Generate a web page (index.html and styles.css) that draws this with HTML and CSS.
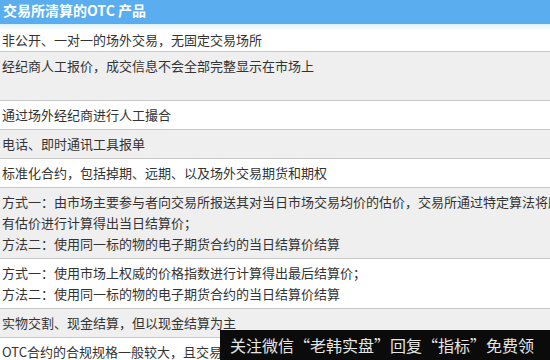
FILE: index.html
```html
<!DOCTYPE html>
<html lang="zh">
<head>
<meta charset="utf-8">
<link rel="stylesheet" href="styles.css">
</head>
<body>
<div class="page">
  <div class="table">
    <div class="head">交易所清算的OTC 产品</div>
    <div class="row first">非公开、一对一的场外交易，无固定交易场所</div>
    <div class="row alt">经纪商人工报价，成交信息不会全部完整显示在市场上<br>&nbsp;</div>
    <div class="row one">通过场外经纪商进行人工撮合</div>
    <div class="row alt one">电话、即时通讯工具报单</div>
    <div class="row one">标准化合约，包括掉期、远期、以及场外交易期货和期权</div>
    <div class="row alt one">方式一：由市场主要参与者向交易所报送其对当日市场交易均价的估价，交易所通过特定算法将所<br>有估价进行计算得出当日结算价；<br>方法二：使用同一标的物的电子期货合约的当日结算价结算</div>
    <div class="row one">方式一：使用市场上权威的价格指数进行计算得出最后结算价；<br>方法二：使用同一标的物的电子期货合约的当日结算价结算</div>
    <div class="row alt one">实物交割、现金结算，但以现金结算为主</div>
    <div class="row one">OTC合约的合规规格一般较大，且交易所对合约的规格有统一规定</div>
  </div>
  <div class="banner">关注微信“老韩实盘”回复“指标”免费领</div>
</div>
</body>
</html>
```

FILE: styles.css
```css
html, body {
  margin: 0;
  padding: 0;
  background: #fff;
}
body {
  width: 550px;
  height: 360px;
  overflow: hidden;
  font-family: "Noto Sans CJK SC", "Noto Sans", sans-serif;
  font-size: 13px;
  color: #333;
}
.page {
  position: relative;
  width: 550px;
  height: 360px;
  overflow: hidden;
}
.table {
  width: 600px;
  display: flex;
  flex-direction: column;
}
.head {
  height: 23px;
  line-height: 21px;
  padding: 0 3px;
  background: #5aaef0;
  border-bottom: 1px solid #6aa8d8;
  color: #fff;
  font-size: 14px;
  font-weight: bold;
  white-space: nowrap;
}
.row {
  padding: 3px 2px;
  line-height: 21px;
  border-bottom: 1px solid #c8c8c8;
  background: #fff;
  white-space: nowrap;
}
.row.one {
  padding-bottom: 4px;
}
.row.alt {
  background: #efefef;
}
.row.first {
  padding-top: 5px;
  padding-bottom: 1px;
  background: linear-gradient(#dff3fa 0, #f6fcfd 5px, #fff 7px);
}
.banner {
  position: absolute;
  left: 220px;
  top: 330px;
  width: 330px;
  height: 30px;
  background: #0b0b0b;
  color: #e6e6e6;
  font-size: 16px;
  line-height: 30px;
  padding-left: 10px;
  box-sizing: border-box;
  white-space: nowrap;
}
```
